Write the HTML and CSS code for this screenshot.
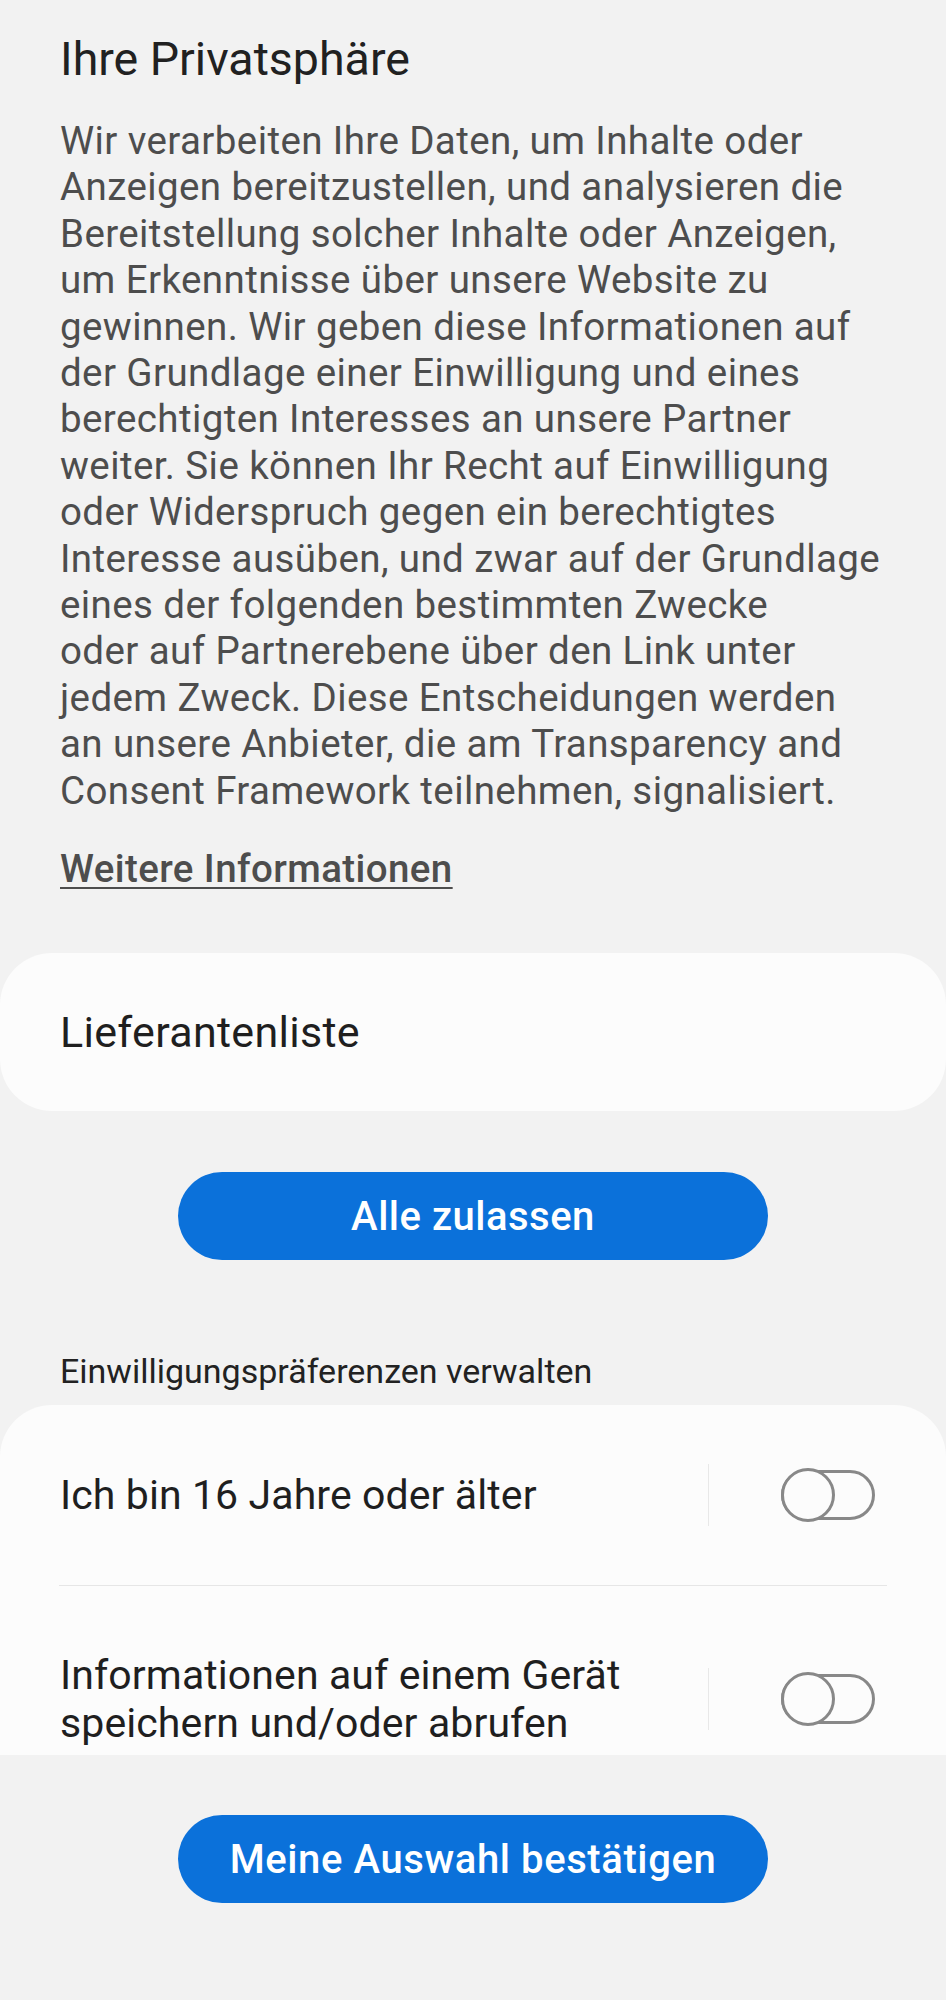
FILE: index.html
```html
<!DOCTYPE html>
<html lang="de">
<head>
	<meta charset="UTF-8"/>
	<title>Ihre Privatsphäre</title>
	<link rel="stylesheet" href="styles.css">
</head>
<body>
<div class="page">
	<div class="scroll">
		<div class="intro">
			<h1 class="intro_title">Ihre Privatsphäre</h1>
			<!-- Zeilenumbrüche wie in der App (Android bricht ausgeglichen um) -->
			<p class="intro_text">Wir verarbeiten Ihre Daten, um Inhalte oder<br>
				Anzeigen bereitzustellen, und analysieren die<br>
				Bereitstellung solcher Inhalte oder Anzeigen,<br>
				um Erkenntnisse über unsere Website zu<br>
				gewinnen. Wir geben diese Informationen auf<br>
				der Grundlage einer Einwilligung und eines<br>
				berechtigten Interesses an unsere Partner<br>
				weiter. Sie können Ihr Recht auf Einwilligung<br>
				oder Widerspruch gegen ein berechtigtes<br>
				Interesse ausüben, und zwar auf der Grundlage<br>
				eines der folgenden bestimmten Zwecke<br>
				oder auf Partnerebene über den Link unter<br>
				jedem Zweck. Diese Entscheidungen werden<br>
				an unsere Anbieter, die am Transparency and<br>
				Consent Framework teilnehmen, signalisiert.</p>
			<a class="intro_link" href="#">Weitere Informationen</a>
		</div>

		<div class="card card_vendor">Lieferantenliste</div>

		<div class="btn_wrap">
			<button class="btn">Alle zulassen</button>
		</div>

		<div class="pref_label">Einwilligungspräferenzen verwalten</div>
		<ul class="card pref_list">
			<li class="pref_item">
				<span class="pref_name">Ich bin 16 Jahre oder älter</span>
				<span class="pref_sep"></span>
				<span class="toggle"><span class="toggle_knob"></span></span>
			</li>
			<li class="pref_item">
				<span class="pref_name">Informationen auf einem Gerät speichern und/oder abrufen</span>
				<span class="pref_sep"></span>
				<span class="toggle"><span class="toggle_knob"></span></span>
			</li>
		</ul>
	</div>
	<div class="footer">
		<button class="btn btn_wide">Meine Auswahl bestätigen</button>
	</div>
</div>
</body>
</html>
```

FILE: styles.css
```css
*{margin:0;padding:0;box-sizing:border-box;}
html,body{height:100%;}
body{font-family:Roboto,"Noto Sans",Arial,sans-serif;background:#f2f2f2;color:#222;}
ul,li{list-style:none;}

.page{display:flex;flex-direction:column;height:2000px;}
.scroll{flex:1;overflow:hidden;}
.footer{height:245px;display:flex;justify-content:center;padding-top:60px;}

.intro{padding:32px 30px 0 60px;}
.intro_title{font-size:46.5px;font-weight:400;line-height:55px;color:#212121;}
.intro_text{margin-top:31px;font-size:38.5px;line-height:46.4px;letter-spacing:0.4px;color:#4d4d4d;white-space:nowrap;}
.intro_link{display:inline-block;margin-top:32px;font-size:38.5px;line-height:46px;letter-spacing:0.4px;font-weight:500;color:#4d4d4d;text-decoration:underline;text-decoration-thickness:2px;text-underline-offset:5px;}

.card{background:#fcfcfc;border-radius:52px;}
.card_vendor{margin-top:61px;height:158px;display:flex;align-items:center;padding:0 60px;font-size:43px;letter-spacing:0.3px;color:#1f1f1f;}

.btn_wrap{display:flex;justify-content:center;margin-top:61px;}
.btn{width:590px;height:88px;border:0;border-radius:44px;background:#0b71da;color:#fff;font-family:Roboto,"Noto Sans",Arial,sans-serif;font-size:40px;font-weight:500;letter-spacing:0.5px;}
.btn_wide{letter-spacing:0.6px;}

.pref_label{margin-top:91px;padding:0 60px;font-size:34px;line-height:41px;color:#222;}
.pref_list{margin-top:13px;border-radius:52px 52px 0 0;}
.pref_item{display:flex;align-items:center;margin:0 59px;padding:65px 0;border-bottom:1px solid #e6e6e6;}
.pref_name{flex:1;padding-left:1px;font-size:41px;line-height:48px;letter-spacing:0.1px;color:#1f1f1f;}
.pref_sep{width:1px;height:62px;margin:-7px 0 -7px 20px;background:#e8e8e8;}
.toggle{position:relative;width:94px;height:50px;margin-left:72px;margin-right:12px;border:3px solid #888;border-radius:25px;}
.toggle_knob{position:absolute;left:-3px;top:-5px;width:54px;height:54px;border:3px solid #888;border-radius:50%;background:#fcfcfc;}
```
